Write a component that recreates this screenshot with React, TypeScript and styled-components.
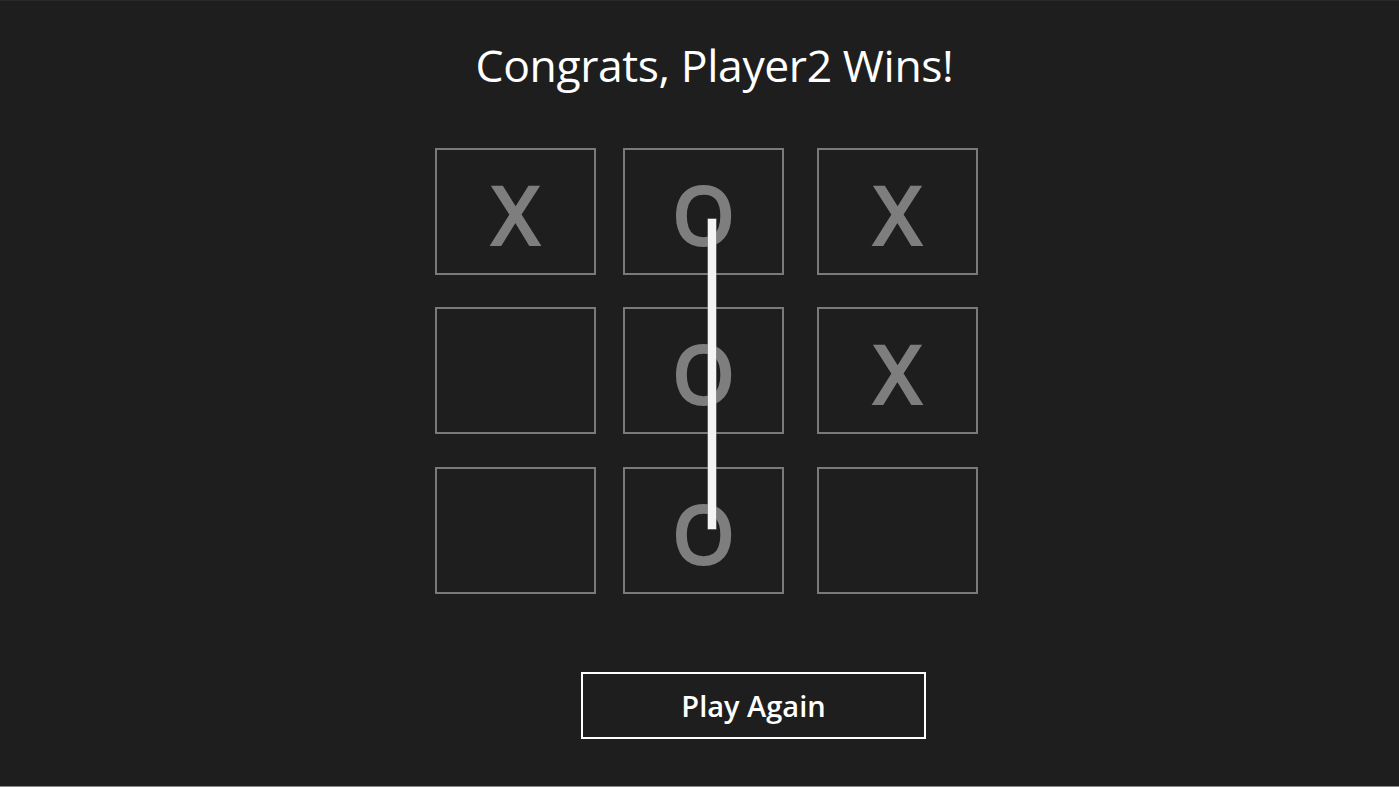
import React, { memo } from 'react'
import styled, { createGlobalStyle } from 'styled-components'

type Mark = 'X' | 'O' | ''

const BOARD: Mark[] = ['X', 'O', 'X', '', 'O', 'X', '', 'O', '']

const GlobalStyle = createGlobalStyle`
  html, body {
    margin: 0;
    padding: 0;
    background: #1e1e1e;
  }
  body {
    font-family: 'Open Sans', 'Noto Sans', 'Liberation Sans', sans-serif;
    color: #fff;
  }
`

const Screen = styled.div`
  width: 1399px;
  height: 787px;
  box-sizing: border-box;
  border-top: 1px solid #2a2a2a;
  border-bottom: 1px solid #8a8a8a;
  background: #1e1e1e;
  display: flex;
  flex-direction: column;
  align-items: flex-start;
  overflow: hidden;
`

const Title = styled.h1`
  align-self: stretch;
  margin: 34px 0 0;
  padding-left: 30px;
  text-align: center;
  font-size: 44.5px;
  font-weight: 400;
  line-height: 60px;
  letter-spacing: -0.4px;
`

const Board = styled.div`
  position: relative;
  margin: 53px 0 0 435px;
  display: grid;
  grid-template-columns: 188px 194px 161px;
  grid-template-rows: 159px 160px 127px;
`

// marks are a semibold weight: regular glyphs thickened with a stroke
const Cell = styled.div`
  width: 161px;
  height: 127px;
  box-sizing: border-box;
  border: 2px solid #7a7a7a;
  display: flex;
  align-items: center;
  justify-content: center;
  padding-top: 5px;
  color: #7e7e7e;
  font-size: 78px;
  font-weight: 400;
  line-height: 1;
  -webkit-text-stroke: 4px #7e7e7e;
`

// winning strike drawn over the middle column
const Strike = styled.div`
  position: absolute;
  left: 273px;
  top: 71px;
  width: 8px;
  height: 310px;
  background: #f4f4f4;
  box-shadow: 0 0 0 0.5px #9a9a9a;
`

const PlayAgain = styled.button`
  margin: 78px 0 0 581px;
  width: 345px;
  height: 67px;
  box-sizing: border-box;
  border: 2px solid #fff;
  background: transparent;
  color: #fff;
  font-family: inherit;
  font-size: 29px;
  font-weight: 600;
  cursor: pointer;
`

export default memo(function App() {
  return (
    <>
      <GlobalStyle />
      <Screen>
        <Title>Congrats, Player2 Wins!</Title>
        <Board>
          {BOARD.map((mark, i) => (
            <Cell key={i}>{mark}</Cell>
          ))}
          <Strike />
        </Board>
        <PlayAgain>Play Again</PlayAgain>
      </Screen>
    </>
  )
})
